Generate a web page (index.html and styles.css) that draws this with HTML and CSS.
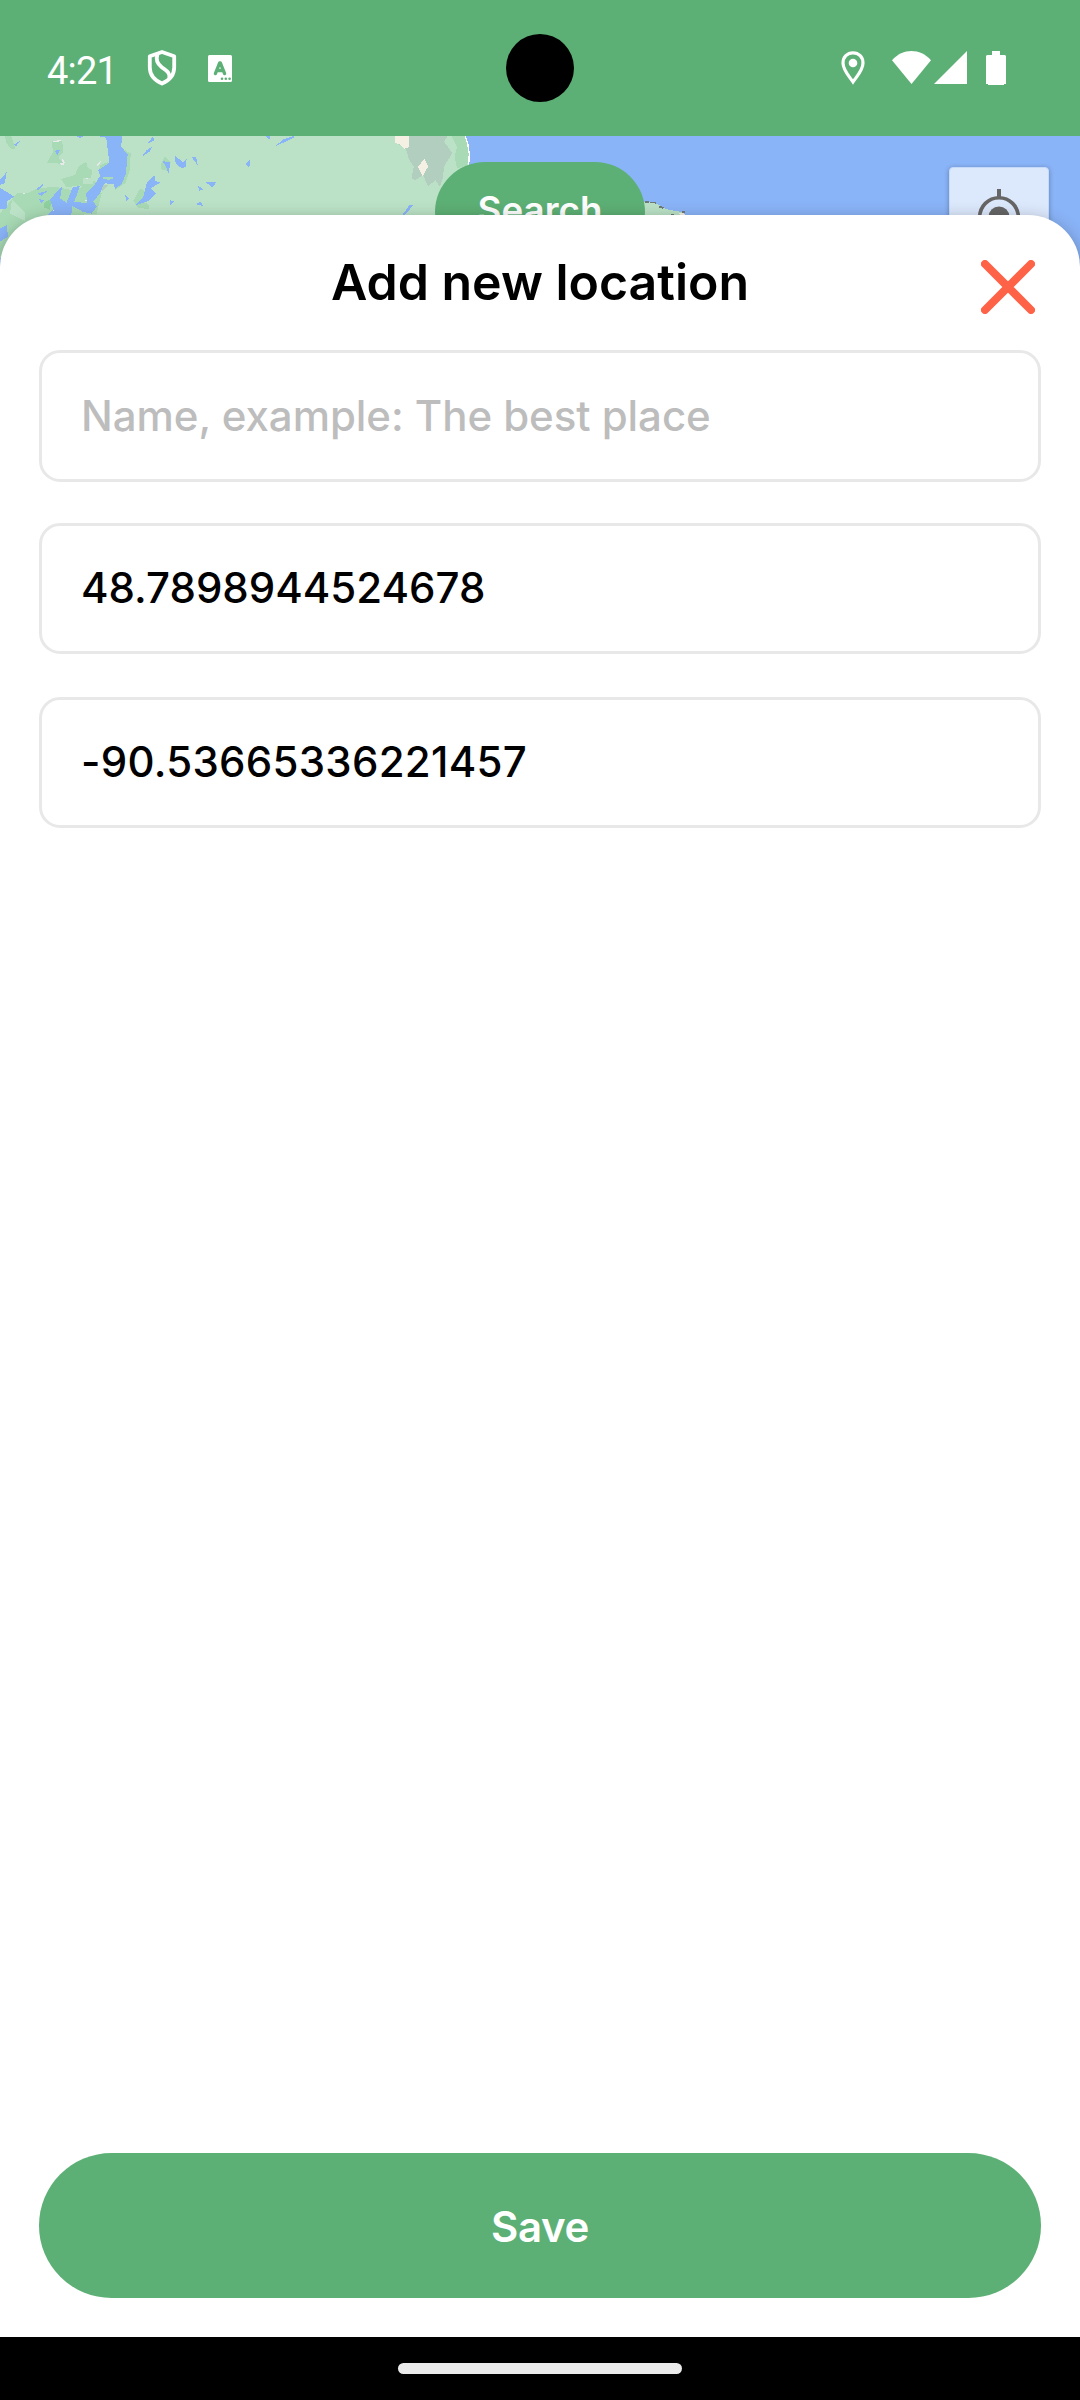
FILE: index.html
```html
<!DOCTYPE html>
<html lang="en">
<head>
<meta charset="utf-8">
<title>Add new location</title>
<link rel="stylesheet" href="styles.css">
</head>
<body>
<div class="screen">
  <header class="status-bar">
    <div class="status-left">
      <span class="clock">4:21</span>
      <svg class="icon-shield" viewBox="0 0 30 36" fill="none" stroke="#fff" stroke-width="3.8" stroke-linejoin="round"><path d="M15 2 27.2 6.2V17.5C27.2 25 22 30.5 15 33.6 8 30.5 2.800 25 2.800 17.500V6.200Z"/><path d="M10.500 4.200C8.500 10 10 13.500 14.500 17 19.500 20.800 23.300 22.500 22.300 28"/></svg>
      <svg class="icon-lang" viewBox="0 0 24 27"><rect width="24" height="27" rx="1.500" fill="#fff"/><path d="M7.400 18.600 11.700 7.800h.6L16.600 18.600M9 15.500h6" fill="none" stroke="#5db075" stroke-width="3.300" stroke-linejoin="round" stroke-linecap="round"/><g fill="#5db075"><circle cx="14" cy="23.800" r="1.300"/><circle cx="17.800" cy="23.800" r="1.300"/><circle cx="21.600" cy="23.800" r="1.300"/></g></svg>
    </div>
    <div class="camera"></div>
    <div class="status-right">
      <svg class="icon-pin" viewBox="0 0 24 34"><path d="M12 1.800C6.200 1.800 2 6.200 2 12c0 7 5.500 12.500 10 18.900C16.500 24.500 22 19 22 12 22 6.200 17.800 1.800 12 1.800Z" fill="none" stroke="#fff" stroke-width="3.200"/><circle cx="12" cy="12" r="4.300" fill="#fff"/></svg>
      <svg class="icon-wifi" viewBox="0 0 39 33" fill="#fff"><path d="M0 9.300C11-3 28-3 39 9.300L19.500 33Z"/></svg>
      <svg class="icon-signal" viewBox="0 0 33 33" fill="#fff"><path d="M33 0V33H0Z"/></svg>
      <svg class="icon-battery" viewBox="0 0 20 34" fill="#fff"><path d="M6 0h8v4h5l1 1v28h-2v1H2v-1H0V5l1-1h5Z"/></svg>
    </div>
  </header>

  <section class="map">
    <svg class="map-tiles" viewBox="0 18 3240 420" shape-rendering="crispEdges">
      <rect y="18" width="3240" height="420" fill="#8ab4f8"/>
      <path d="M0 18H1396L1408 70 1406 110 1380 438H0Z" fill="#bbe2c6"/>
      <g fill="#a8dab5">
        <path d="M14 18h20l12 38H32L20 40ZM155 34l32-2 2 34-14 18 20 18-54-4 18-32Z"/>
        <path d="M183 147 225 135 235 110 258 95 263 112 278 122 272 144 290 160 262 180 240 166 200 172Z"/>
        <path d="M0 250 36 208 52 188H85L110 176 165 170 215 180 290 160 305 190 290 252 240 254 140 260 0 380Z"/>
        <path d="M366 55 392 70 390 120 376 160 345 180 360 110ZM300 106 326 95 318 125 296 130Z"/>
        <path d="M482 105 495 78 512 98 505 124 485 118ZM400 212 420 176 450 190 430 215 448 225 447 236 415 235Z"/>
        <path d="M1354 18h43l11 60-7 28-30 9-7-35 7-28Z"/>
      </g>
      <g fill="#bbe2c6"><path d="M36 210 74 248V272L30 250ZM248 144h32v18h-30Z"/></g>
      <path d="M134 216 154 207 150 240 132 232Z" fill="#8fd0a0"/>
      <g fill="#8ab4f8">
        <path d="M318 18H367L363 50 383 72 378 130 366 160 345 179 342 162 315 160 300 190 280 214 290 230 275 251 250 246 217 228 214 255H142L160 238 150 210 170 185 187 168 180 205 200 218 218 172 240 168 222 217 262 218 258 190 285 163 300 138 295 120 328 98Z"/>
        <path d="M0 150 20 126 14 160 0 165ZM0 173 42 200 20 215 22 235 0 238ZM0 295 20 285 24 320 0 335ZM0 375l5 30H0Z"/>
        <path d="M40 46 62 30 50 47ZM164 62 180 60 172 75ZM108 178 138 155 116 180ZM113 190 142 183 125 198ZM118 208l14 2-8 9ZM228 18h24l-10 6ZM292 18h30v6Z"/>
        <path d="M443 40 460 18 461 32ZM426 80 440 60 455 52 450 64ZM525 78 549 96 560 86 558 110 545 115 527 100ZM487 93 512 98 505 130 499 112ZM576 82 588 81 594 108ZM735 102 750 89 748 114ZM617 156 649 157 637 173ZM594 168 611 178 597 182ZM510 210 524 215 511 224ZM588 223 600 215 612 229ZM375 194 386 205 380 216Z"/>
        <path d="M404 227 430 200 440 160 463 135 466 153 482 157 452 175 468 190 445 213ZM795 18h16v12ZM824 50 850 28 880 18 884 22ZM1208 254 1228 226 1240 225 1216 254Z"/>
      </g>
      <path d="M306 140 345 143 330 149 312 148Z" fill="#a8dab5"/>
      <path d="M308 166h18l-20 18Z" fill="#b1cebe"/>
      <path d="M1185 55 1227 18H1343L1332 35 1357 69 1333 108 1328 145 1320 170 1306 150 1284 170 1270 136 1245 150 1235 145 1241 110 1228 90 1215 52Z" fill="#b1cebe"/>
      <path d="M1185 18H1227V52L1212 56 1202 44 1185 39ZM1274 86 1284 110 1268 138 1254 110Z" fill="#f5f0e4"/>
      <path d="M1185 40 1202 45 1212 57 1218 57 1225 80 1185 80Z" fill="#bbe2c6"/>
      <path d="M1396 18 1403 40 1408 72 1406 104" fill="none" stroke="#fff" stroke-width="4"/>
      <g fill="#e8eaed"><path d="M158 33l26-3v4l-24 2ZM186 84l9 14-5 8-8-6 6-2ZM290 104l12-10-2 8-8 6ZM257 144h8v3h-8ZM68 188h7v4h-7ZM178 100h15v4h-10ZM255 212l6-3-2 7ZM158 241l6-5-3 8Z"/></g>
      <path d="M1930 217 1962 217 2000 238 2050 247 2058 260H1930Z" fill="#bbe2c6"/>
      <path d="M2036 248l20 3v8h-12Z" fill="#f5f0e4"/>
      <path d="M1935 216l12 0M1950 217l14 0 5 4M1976 229l14 5M2046 246l10-1M2012 253h10" fill="none" stroke="#6e7b78" stroke-width="5"/>
    </svg>
    <div class="search-button">Search</div>
    <div class="locate-button">
      <svg viewBox="0 0 56 56"><circle cx="28" cy="28" r="19.300" fill="none" stroke="#666" stroke-width="3.600"/><circle cx="28" cy="28" r="10.500" fill="#666"/><path d="M28 0v8M28 48v8M0 28h8M48 28h8" stroke="#666" stroke-width="4"/></svg>
    </div>
  </section>

  <main class="sheet">
    <div class="sheet-header">
      <h1 class="title">Add new location</h1>
      <svg class="close" viewBox="0 0 54 54"><path d="M4 4 50 50M50 4 4 50" stroke="#ff6347" stroke-width="8" stroke-linecap="round"/></svg>
    </div>
    <form class="fields">
      <div class="field field-name">Name, example: The best place</div>
      <div class="field">48.7898944524678</div>
      <div class="field field-longitude">-90.53665336221457</div>
    </form>
    <div class="save-button">Save</div>
  </main>

  <footer class="nav-bar"><div class="home-handle"></div></footer>
</div>
</body>
</html>
```

FILE: styles.css
```css
* { box-sizing: border-box; }
body { margin: 0; background: #fff; font-family: Inter, sans-serif; }
svg { display: block; }

.screen { width: 1080px; height: 2400px; display: flex; flex-direction: column; overflow: hidden; }

.status-bar {
  height: 136px;
  flex: none;
  display: grid;
  grid-template-columns: 1fr 68px 1fr;
  align-items: center;
  background: #5db075;
  color: #fff;
}
.status-left { display: flex; align-items: center; padding-left: 47px; }
.clock { width: 100px; font: 400 38px/44px Roboto, sans-serif; letter-spacing: -0.8px; padding-top: 5px; }
.icon-shield { width: 30px; height: 36px; }
.icon-lang { width: 24px; height: 27px; margin-left: 31px; }
.camera { width: 68px; height: 68px; border-radius: 50%; background: #000; }
.status-right { display: flex; align-items: flex-start; justify-content: flex-end; padding-right: 74px; }
.icon-pin { width: 24px; height: 34px; margin-right: 27px; }
.icon-wifi { width: 39px; height: 33px; margin-right: 3px; }
.icon-signal { width: 33px; height: 33px; margin-right: 19px; }
.icon-battery { width: 20px; height: 34px; }

.map { position: relative; height: 140px; flex: none; }
.map-tiles { width: 1080px; height: 140px; }
.search-button {
  position: absolute; left: 435px; top: 26px;
  width: 210px; height: 100px; border-radius: 50px;
  background: #5db075; color: #fff;
  display: flex; justify-content: center;
  font-size: 36.75px; font-weight: 600; line-height: 96px;
}
.locate-button {
  position: absolute; left: 949px; top: 31px;
  width: 100px; height: 100px; border-radius: 4px;
  background: #dce8fc; border: 1px solid #c5daf9;
  box-shadow: 0 1px 5px rgba(0, 0, 0, .3);
  display: flex; align-items: center; justify-content: center;
}
.locate-button svg { width: 56px; height: 56px; }

.sheet {
  position: relative;
  flex: 1;
  margin-top: -61px;
  padding: 0 39px 39px;
  display: flex;
  flex-direction: column;
  background: #fff;
  border-radius: 52px 52px 0 0;
  box-shadow: 0 5px 18px rgba(0, 0, 0, .32);
}
.sheet-header {
  height: 135px;
  display: grid;
  grid-template-columns: 60px 1fr 60px;
  align-items: start;
}
.title { grid-column: 2; margin: 37px 0 0; text-align: center; font-size: 50px; font-weight: 600; line-height: 60px; }
.close { width: 54px; height: 54px; margin-top: 45px; }
.fields { display: flex; flex-direction: column; }
.field {
  height: 131px;
  margin-bottom: 43px;
  border: 3px solid #e8e8e8;
  border-radius: 21px;
  padding: 0 39px;
  font-size: 42px;
  font-weight: 500;
  line-height: 123px;
  color: #000;
}
.field-name { height: 132px; margin-bottom: 41px; line-height: 125px; letter-spacing: -0.05px; color: #bdbdbd; }
.field-longitude { letter-spacing: .27px; margin-bottom: 0; }
.save-button {
  height: 145px;
  margin-top: auto;
  border-radius: 73px;
  background: #5db075;
  color: #fff;
  text-align: center;
  font-size: 42px;
  font-weight: 600;
  letter-spacing: -0.3px;
  line-height: 147px;
}

.nav-bar { position: relative; height: 63px; flex: none; display: flex; align-items: center; justify-content: center; background: #000; }
.home-handle { width: 284px; height: 11px; border-radius: 6px; background: #ebebeb; }
```
